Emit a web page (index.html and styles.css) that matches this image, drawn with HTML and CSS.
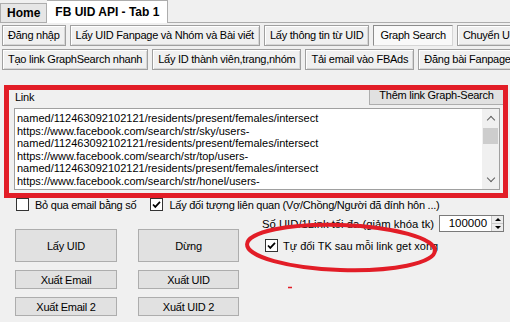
FILE: index.html
```html
<!DOCTYPE html>
<html lang="vi">
<head>
  <meta charset="UTF-8">
  <title>FB UID API</title>
  <link rel="stylesheet" href="styles.css">
</head>
<body>
  <div class="tabs">
    <div class="tab">Home</div>
    <div class="tab active">FB UID API - Tab 1</div>
  </div>

  <div class="page">
    <div class="subtabs">
      <div class="row">
        <span class="st">Đăng nhập</span>
        <span class="st">Lấy UID Fanpage và Nhóm và Bài viết</span>
        <span class="st">Lấy thông tin từ UID</span>
        <span class="st selected">Graph Search</span>
        <span class="st last">Chuyển UID</span>
      </div>
      <div class="row">
        <span class="st">Tạo link GraphSearch nhanh</span>
        <span class="st">Lấy ID thành viên,trang,nhóm</span>
        <span class="st">Tải email vào FBAds</span>
        <span class="st last">Đăng bài Fanpage</span>
      </div>
    </div>

    <div class="links">
      <div class="links-head">
        <span class="links-label">Link</span>
        <button class="btn add-link">Thêm link Graph-Search</button>
      </div>
      <div class="textbox">
        <div class="lines">
          <div>named/112463092102121/residents/present/females/intersect</div>
          <div>https://www.facebook.com/search/str/sky/users-</div>
          <div>named/112463092102121/residents/present/females/intersect</div>
          <div>https://www.facebook.com/search/str/top/users-</div>
          <div>named/112463092102121/residents/present/females/intersect</div>
          <div>https://www.facebook.com/search/str/honel/users-</div>
        </div>
        <div class="scroll">
          <span class="arrow up"></span>
          <span class="thumb"></span>
          <span class="arrow down"></span>
        </div>
      </div>
    </div>

    <div class="opts">
      <label class="check"><span class="box"></span>Bỏ qua email bằng số</label>
      <label class="check"><span class="box"><svg viewBox="0 0 11 11"><path d="M2 5.5l2.3 2.4L9 2.8"/></svg></span>Lấy đối tượng liên quan (Vợ/Chồng/Người đã đính hôn ...)</label>
    </div>

    <div class="lower">
      <div class="actions">
        <button class="btn big">Lấy UID</button>
        <button class="btn big">Dừng</button>
        <button class="btn">Xuất Email</button>
        <button class="btn">Xuất UID</button>
        <button class="btn">Xuất Email 2</button>
        <button class="btn">Xuất UID 2</button>
      </div>
      <div class="side">
        <div class="limit">
          <span class="limit-label">Số UID/1Link tối đa (giảm khóa tk)</span>
          <div class="spin">
            <span class="spin-val">100000</span>
            <span class="spin-btns"><i class="tri-up"></i><i class="tri-down"></i></span>
          </div>
        </div>
        <label class="check auto"><span class="box"><svg viewBox="0 0 11 11"><path d="M2 5.5l2.3 2.4L9 2.8"/></svg></span>Tự đổi TK sau mỗi link get xong</label>
      </div>
    </div>
  </div>

  <svg class="marks" width="510" height="322" viewBox="0 0 510 322">
    <rect x="6.5" y="87.5" width="499" height="108" />
    <ellipse cx="341" cy="247.5" rx="94" ry="22.5" transform="rotate(2 341 247.5)" />
    <path d="M288 287.5h4" />
  </svg>
</body>
</html>
```

FILE: styles.css
```css
body {
  margin: 0;
  width: 510px;
  height: 322px;
  overflow: hidden;
  position: relative;
  background: #f0f0f0;
  color: #000;
  font-family: "Liberation Sans", Arial, sans-serif;
  font-size: 11px;
  letter-spacing: -0.25px;
}

.tabs {
  display: flex;
  align-items: flex-end;
  height: 22px;
  border-bottom: 1px solid #adadad;
}
.tab {
  height: 18px;
  line-height: 19px;
  padding: 0 6px;
  font-size: 12px;
  font-weight: bold;
  letter-spacing: 0;
  background: #e6e6e6;
  border: 1px solid #adadad;
  border-bottom: none;
}
.tab.active {
  height: 22px;
  line-height: 22px;
  padding: 0 8px;
  margin-bottom: -1px;
  background: #fff;
  border-left: none;
}

.subtabs {
  padding: 2px 0 0 2px;
  white-space: nowrap;
}
.row {
  display: flex;
  gap: 4px;
}
.row + .row {
  margin-top: 3px;
}
.st {
  flex-shrink: 0;
  height: 19px;
  line-height: 19px;
  padding: 0 5px;
  background: #f0f0f0;
  border: 1px solid #a0a0a0;
  box-shadow: inset 1px 1px #fff, inset -1px -1px #d6d6d6;
}
.st.last {
  flex: 1;
  border-right: none;
}
.st.selected {
  padding: 0 6px;
  background: #f9f9f9;
  border-color: #8c8c8c #d6d6d6 #d6d6d6 #8c8c8c;
  box-shadow: none;
}

.btn {
  font: inherit;
  letter-spacing: inherit;
  color: #000;
  background: #e1e1e1;
  border: 1px solid #adadad;
  padding: 0;
  margin: 0;
}

.links {
  margin-top: 15px;
}
.links-head {
  display: flex;
  justify-content: space-between;
  align-items: flex-end;
  padding: 0 6px 0 15px;
}
.add-link {
  width: 135px;
  height: 20px;
}
.links-label {
  line-height: 13px;
  margin-bottom: 1px;
}
.textbox {
  display: flex;
  margin: 3px 10px 0 14px;
  height: 80px;
  background: #fff;
  border: 1px solid #a0a0a0;
}
.lines {
  flex: 1;
  overflow: hidden;
  white-space: nowrap;
  padding: 3px 2px 0;
  line-height: 12.6px;
  letter-spacing: 0;
}
.scroll {
  width: 17px;
  display: flex;
  flex-direction: column;
  align-items: center;
  background: #f0f0f0;
}
.arrow {
  width: 5px;
  height: 5px;
  border: solid #606060;
  border-width: 1.5px 1.5px 0 0;
}
.arrow.up {
  margin: 8px 0 5px;
  transform: rotate(-45deg);
}
.arrow.down {
  margin-top: auto;
  margin-bottom: 8px;
  transform: rotate(135deg);
}
.thumb {
  width: 15px;
  height: 16px;
  background: #cdcdcd;
}

.opts {
  display: flex;
  gap: 14px;
  margin-top: 8px;
  padding-left: 16px;
}
.check {
  display: flex;
  align-items: center;
  gap: 6px;
  height: 13px;
  white-space: nowrap;
}
.box {
  width: 11px;
  height: 11px;
  flex-shrink: 0;
  background: #fff;
  border: 1px solid #333;
}
.box svg {
  display: block;
  width: 11px;
  height: 11px;
  fill: none;
  stroke: #000;
  stroke-width: 1.7;
}

.lower {
  display: flex;
  margin-top: 4px;
}
.actions {
  display: grid;
  grid-template-columns: 102px 101px;
  grid-template-rows: 33px 19px 19px;
  column-gap: 21px;
  row-gap: 8px;
  margin: 14px 0 0 15px;
}
.side {
  flex: 1;
  margin: 0 8px 0 23px;
}
.limit {
  display: flex;
  justify-content: flex-end;
  align-items: center;
  gap: 5px;
  white-space: nowrap;
}
.limit-label {
  flex-shrink: 0;
  font-size: 11.3px;
  letter-spacing: 0;
}
.spin {
  display: flex;
  flex-shrink: 0;
  width: 63px;
  height: 15px;
  background: #fff;
  border: 1px solid #7a7a7a;
}
.spin-val {
  flex: 1;
  text-align: right;
  padding-right: 4px;
  line-height: 15px;
  font-size: 11.5px;
  letter-spacing: 0;
}
.spin-btns {
  width: 11px;
  display: flex;
  flex-direction: column;
  border-left: 1px solid #c8c8c8;
  background: #ececec;
}
.spin-btns i {
  flex: 1;
  display: flex;
  align-items: center;
  justify-content: center;
}
.spin-btns i + i {
  border-top: 1px solid #c8c8c8;
}
.tri-up::before,
.tri-down::before {
  content: "";
  border: 3px solid transparent;
}
.tri-up::before {
  border-bottom: 3px solid #000;
  border-top: none;
}
.tri-down::before {
  border-top: 3px solid #000;
  border-bottom: none;
}
.check.auto {
  margin: 7px 0 0 3px;
  gap: 5px;
  letter-spacing: 0;
}

.marks {
  position: absolute;
  top: 0;
  left: 0;
  pointer-events: none;
  fill: none;
  stroke: #e21d27;
}
.marks rect {
  stroke-width: 5;
}
.marks ellipse {
  stroke-width: 4;
}
.marks path {
  stroke-width: 1.5;
}
```
